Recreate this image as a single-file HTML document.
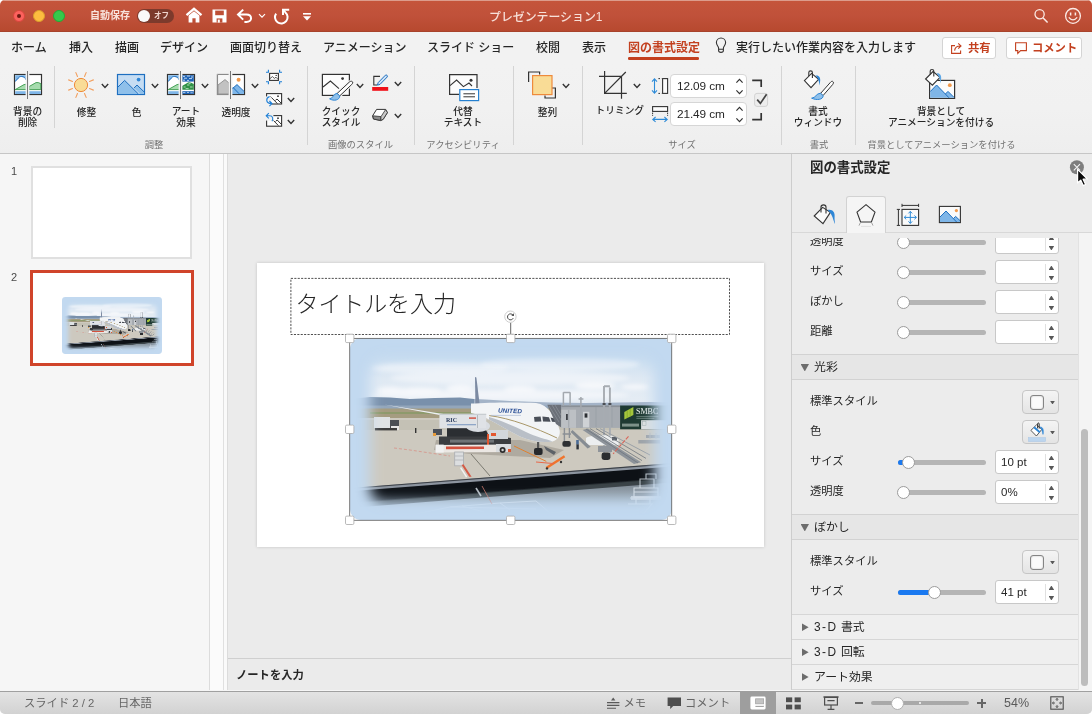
<!DOCTYPE html>
<html lang="ja">
<head>
<meta charset="utf-8">
<title>プレゼンテーション1</title>
<style>
*{box-sizing:border-box;margin:0;padding:0}
html,body{width:1092px;height:714px;overflow:hidden;background:#fff}
#win{position:absolute;left:0;top:0;width:1092px;height:714px;border-radius:5px;overflow:hidden;background:#ececec;will-change:transform}
body{font-family:"Liberation Sans","Noto Sans CJK JP",sans-serif;color:#262626;position:relative;-webkit-font-smoothing:antialiased}
.abs{position:absolute}
#titlebar{position:absolute;left:0;top:0;width:1092px;height:32px;background:linear-gradient(#c5553b 0,#c0513a 50%,#b7492f 100%);border-bottom:1px solid #a8442c;box-shadow:inset 0 1px 0 #dc9c8c}
.tl{position:absolute;top:9.6px;width:12.6px;height:12.6px;border-radius:50%}
#tabs{position:absolute;left:0;top:32px;width:1092px;height:32px;background:#f2f2f2}
.tab{position:absolute;top:8px;font-size:12px;line-height:17px;white-space:nowrap;color:#262626;font-weight:500}
#ribbon{position:absolute;left:0;top:64px;width:1092px;height:90px;background:linear-gradient(#f2f2f2 0,#f1f1f1 50%,#eeeeee 100%);border-bottom:1px solid #c6c6c6}
.rl{position:absolute;font-size:9.7px;line-height:11px;text-align:center;white-space:nowrap;color:#262626;font-weight:500;transform:translateX(-50%)}
.gl{position:absolute;top:139px;font-size:9.3px;line-height:12px;text-align:center;white-space:nowrap;color:#727272;transform:translateX(-50%)}
.sep{position:absolute;width:1px;background:#d4d4d4}
.dd{position:absolute;width:8px;height:5px}
#left{position:absolute;left:0;top:154px;width:210px;height:536px;background:#f6f6f6;border-right:1px solid #dcdcdc}
#gutter{position:absolute;left:210px;top:154px;width:18px;height:536px;background:linear-gradient(90deg,#fbfbfb 0,#fbfbfb 13px,#e0e0e0 13px,#e0e0e0 14px,#fafafa 14px,#fafafa 17px,#dcdcdc 17px)}
#main{position:absolute;left:228px;top:154px;width:563px;height:504px;background:#ebebeb}
#notes{position:absolute;left:228px;top:658px;width:563px;height:32px;background:#ebebeb;border-top:1px solid #cfcfcf}
#panel{position:absolute;left:791px;top:154px;width:301px;height:536px;background:#ececec;border-left:1px solid #cdcdcd}
#status{position:absolute;left:0;top:690px;width:1092px;height:24px;background:linear-gradient(#e4e4e4,#d2d2d2);border-top:1px solid #f6f6f6;box-shadow:inset 0 1px 0 #a0a0a0}
.st{position:absolute;font-size:11.3px;color:#666;white-space:nowrap;line-height:14px}
.pl{position:absolute;left:18px;font-size:11.3px;line-height:16px;color:#262626;white-space:nowrap}
.track{position:absolute;left:111px;width:84px;height:5px;border-radius:3px;background:#b5b5b5}
.knob{position:absolute;width:13px;height:13px;border-radius:50%;background:#fff;border:1px solid #9c9c9c}
.num{position:absolute;left:204px;width:64px;height:24px;background:#fff;border:1px solid #c8c8c8;border-radius:3px;font-size:11.5px;line-height:22px;padding-left:5px;color:#262626}
.num:after{content:"";position:absolute;left:48.5px;top:3px;width:1px;height:17px;background:#e0e0e0}
.num i{position:absolute;left:52.6px;width:5.6px;height:4.4px;background:#585858}
.num i.u{top:4.6px;clip-path:polygon(50% 0,100% 100%,0 100%)}
.num i.d{top:15px;clip-path:polygon(0 0,100% 0,50% 100%)}
.sec{position:absolute;left:0;width:286px;height:26px;background:#e6e6e6;border-top:1px solid #d2d2d2;border-bottom:1px solid #d2d2d2;font-size:11.9px;line-height:24px;padding-left:22px;color:#262626}
.sec2{position:absolute;left:0;width:286px;height:25px;background:#efefef;border-top:1px solid #d6d6d6;font-size:11.9px;line-height:24px;padding-left:22px;color:#262626}
.tri-d{position:absolute;left:8.6px;top:9px;width:8.4px;height:7.4px;background:#6c6c6c;clip-path:polygon(0 0,100% 0,50% 100%)}
.tri-r{position:absolute;left:9.6px;top:8px;width:7px;height:8px;background:#6c6c6c;clip-path:polygon(0 0,100% 50%,0 100%)}
.btn{position:absolute;left:231px;width:37px;height:24px;border:1px solid #c6c6c6;border-radius:4px;background:linear-gradient(#f4f4f4,#e4e4e4)}
.btn:after{content:"";position:absolute;left:27px;top:9.8px;width:5px;height:3.6px;background:#585858;clip-path:polygon(0 0,100% 0,50% 100%)}
.h{position:absolute;width:8px;height:8px;background:#fff;border:1px solid #8d8d8d;border-radius:1px}
</style>
</head>
<body>
<div id="win">
<!-- TITLEBAR -->
<div id="titlebar">
<div class="tl" style="left:12.6px;background:#fc625d;border:0.5px solid #d9453d"><div style="position:absolute;left:50%;top:50%;width:4px;height:4px;margin:-2px 0 0 -2px;border-radius:50%;background:#6e1a12"></div></div>
<div class="tl" style="left:32.7px;background:#fdbd3f;border:0.5px solid #dc9e2c"></div>
<div class="tl" style="left:52.7px;background:#35c94b;border:0.5px solid #23a936"></div>
<div class="abs" style="left:90px;top:9px;font-size:10px;line-height:14px;font-weight:bold;color:#f8e3dc;white-space:nowrap">自動保存</div>
<div class="abs" style="left:137px;top:9px;width:37px;height:14px;border-radius:7px;background:#7c3a2c"><div style="position:absolute;left:1px;top:1px;width:12px;height:12px;border-radius:50%;background:#fafafa"></div><div style="position:absolute;left:17px;top:2px;font-size:7.5px;line-height:10px;color:#f0d6cf;font-weight:bold">オフ</div></div>
<svg class="abs" style="left:185px;top:7px" width="18" height="17" viewBox="0 0 18 17"><path d="M1.5 8.2 L9 1.8 L16.5 8.2" fill="none" stroke="#fff" stroke-width="2.2" stroke-linejoin="miter"/><path d="M3.6 8.6 L9 4.2 L14.4 8.6 V15.6 H10.6 V11.2 H7.4 V15.6 H3.6 Z" fill="#fff"/></svg>
<svg class="abs" style="left:212px;top:9px" width="15" height="14" viewBox="0 0 15 14"><path d="M0.5 0.5 H14.5 V13.5 H0.5 Z" fill="#fff"/><rect x="3.2" y="1.6" width="8.6" height="4.6" fill="#bd4f36"/><rect x="4.6" y="9.4" width="5.8" height="4.2" fill="#bd4f36"/><rect x="5.8" y="10.6" width="2" height="3" fill="#fff"/></svg>
<svg class="abs" style="left:236px;top:8px" width="18" height="16" viewBox="0 0 18 16"><path d="M7.2 1.6 L2 6.6 L7.2 11.6 M2.2 6.6 H10.4 C16.6 6.6 16.6 14 10.4 14 H8.4" fill="none" stroke="#fff" stroke-width="2"/></svg>
<svg class="abs" style="left:258px;top:13px" width="8" height="6" viewBox="0 0 8 6"><path d="M1 1.2 L4 4.2 L7 1.2" fill="none" stroke="#fff" stroke-width="1.2"/></svg>
<svg class="abs" style="left:272px;top:7px" width="19" height="18" viewBox="0 0 19 18"><path d="M4.1 6.6 A6.3 6.3 0 1 0 13.4 5.4 L11.4 3.2" fill="none" stroke="#fff" stroke-width="2"/><path d="M11 8 V2.7 H17.2" fill="none" stroke="#fff" stroke-width="2"/></svg>
<svg class="abs" style="left:302px;top:12px" width="10" height="10" viewBox="0 0 10 10"><rect x="1" y="1" width="8" height="1.6" fill="#fff"/><path d="M1 4.2 H9 L5 8.6 Z" fill="#fff"/></svg>
<div class="abs" style="left:489px;top:9px;font-size:11.9px;line-height:17px;color:#f7e0d9;white-space:nowrap;font-weight:500">プレゼンテーション1</div>
<svg class="abs" style="left:1032px;top:7px" width="18" height="18" viewBox="0 0 18 18"><circle cx="7.6" cy="7.3" r="4.6" fill="none" stroke="#fbeae5" stroke-width="1.3"/><path d="M10.9 10.7 L15.6 15.6" stroke="#fbeae5" stroke-width="1.5"/></svg>
<svg class="abs" style="left:1064px;top:7px" width="18" height="18" viewBox="0 0 18 18"><circle cx="9" cy="8.9" r="7.4" fill="none" stroke="#fbeae5" stroke-width="1.3"/><path d="M6.6 5.4 V8.4 M11.4 5.4 V8.4" stroke="#fbeae5" stroke-width="1.5"/><path d="M4.8 10.4 Q9 15.4 13.2 10.4" fill="none" stroke="#fbeae5" stroke-width="1.3"/></svg>
</div>
<!-- TABS -->
<div id="tabs">
<div class="tab" style="left:11px">ホーム</div>
<div class="tab" style="left:69px">挿入</div>
<div class="tab" style="left:115px">描画</div>
<div class="tab" style="left:160px">デザイン</div>
<div class="tab" style="left:230px">画面切り替え</div>
<div class="tab" style="left:323px">アニメーション</div>
<div class="tab" style="left:427px">スライド ショー</div>
<div class="tab" style="left:536px">校閲</div>
<div class="tab" style="left:582px">表示</div>
<div class="tab" style="left:628px;font-weight:bold;color:#c3401f">図の書式設定</div>
<div class="abs" style="left:628px;top:25px;width:70.5px;height:2.6px;background:#c3401f;border-radius:1.3px"></div>
<svg class="abs" style="left:714px;top:5px" width="14" height="17" viewBox="0 0 14 17"><path d="M4.6 11.2 C4.6 9.4 2.4 8.4 2.4 5.6 A4.6 4.6 0 0 1 11.6 5.6 C11.6 8.4 9.4 9.4 9.4 11.2 V13.6 Q9.4 15.4 7 15.4 Q4.6 15.4 4.6 13.6 Z M4.8 12.2 H9.2" fill="none" stroke="#333" stroke-width="1.1"/></svg>
<div class="tab" style="left:736px">実行したい作業内容を入力します</div>
<div class="abs" style="left:942px;top:5px;width:54px;height:22px;background:#fff;border:1px solid #d4d4d4;border-radius:3px"></div>
<svg class="abs" style="left:950px;top:9px" width="14" height="14" viewBox="0 0 14 14"><path d="M5 4.6 H1.6 V12.4 H10.6 V9.4" fill="none" stroke="#c3401f" stroke-width="1.1"/><path d="M4.6 9.6 C5 6.4 7 5 10.2 5 M8.2 2.4 L11 5 L8.2 7.6" fill="none" stroke="#c3401f" stroke-width="1.1"/></svg>
<div class="tab" style="left:968px;font-weight:bold;color:#c3401f;font-size:11.3px">共有</div>
<div class="abs" style="left:1006px;top:5px;width:76px;height:22px;background:#fff;border:1px solid #d4d4d4;border-radius:3px"></div>
<svg class="abs" style="left:1014px;top:9px" width="14" height="14" viewBox="0 0 14 14"><path d="M1.6 1.8 H12.4 V9.6 H6.6 L3.8 12.4 V9.6 H1.6 Z" fill="none" stroke="#c3401f" stroke-width="1.1"/></svg>
<div class="tab" style="left:1032px;font-weight:bold;color:#c3401f;font-size:11.3px">コメント</div>
</div>
<!-- RIBBON -->
<div id="ribbon">
<svg class="abs" style="left:13px;top:6px" width="30" height="30" viewBox="0 0 30 30">
<rect x="1.5" y="4.5" width="27" height="20" fill="#fff" stroke="#333" stroke-width="1.2"/>
<path d="M2.2 5.2 H13 V9.8 C11.6 5.6 5.8 5.6 5.2 8.6 C3.4 8.8 3.6 11.2 2.2 11.2 Z" fill="#7fb6e8"/>
<path d="M2.2 11.2 C3.6 11.2 3.4 8.8 5.2 8.6 C5.8 5.6 11.6 5.6 13 9.8" fill="none" stroke="#1e6fc0" stroke-width="1"/>
<path d="M2.2 19.6 L11 14.6 Q13 14 14 14.6 V19.6 Z M16 16.6 L23 12.6 Q25 12 27.8 13.6 V19.6 H16 Z" fill="#a6dcae" stroke="#3a9a4c" stroke-width="0.9"/>
<rect x="2.2" y="21.2" width="25.6" height="2.8" fill="#7fb6e8"/>
<rect x="12.6" y="0" width="3.8" height="30" fill="#f1f1f1"/>
<path d="M14.5 1 V29" stroke="#777" stroke-width="1"/>
</svg>
<div class="rl" style="left:27.6px;top:41.8px">背景の</div><div class="rl" style="left:27.6px;top:53px">削除</div>
<div class="sep" style="left:54px;top:2px;height:62px"></div>
<svg class="abs" style="left:67px;top:7px" width="28" height="28" viewBox="0 0 28 28"><circle cx="14" cy="14" r="6.6" fill="#f9dc96" stroke="#ee8a3c" stroke-width="1"/><path d="M22.50 17.52 L26.38 19.13 M17.52 22.50 L19.13 26.38 M10.48 22.50 L8.87 26.38 M5.50 17.52 L1.62 19.13 M5.50 10.48 L1.62 8.87 M10.48 5.50 L8.87 1.62 M17.52 5.50 L19.13 1.62 M22.50 10.48 L26.38 8.87 " stroke="#f2a060" stroke-width="1.1" stroke-linecap="round"/></svg>
<svg class="abs" style="left:101px;top:19px" width="8" height="6" viewBox="0 0 8 6"><path d="M0.8 1 L4 4.4 L7.2 1" fill="none" stroke="#333" stroke-width="1.4"/></svg>
<div class="rl" style="left:86.5px;top:42.5px">修整</div>
<svg class="abs" style="left:116px;top:9px" width="30" height="23" viewBox="0 0 30 23">
<rect x="1.5" y="1.5" width="27" height="20" fill="#c6ddf3" stroke="#1e6fc0" stroke-width="1.2"/>
<path d="M2 14 L8.6 7.4 L22.4 21 H2 Z M18 15 L21 12 L28 19 V21 H24.4 Z" fill="#8fc0ea"/>
<path d="M2 14 L8.6 7.4 L22.4 21 M18 15 L21 12 L28.2 19" fill="none" stroke="#1e6fc0" stroke-width="1"/>
<circle cx="22.6" cy="6.6" r="1.9" fill="#2e86d6"/>
</svg>
<svg class="abs" style="left:151px;top:19px" width="8" height="6" viewBox="0 0 8 6"><path d="M0.8 1 L4 4.4 L7.2 1" fill="none" stroke="#333" stroke-width="1.4"/></svg>
<div class="rl" style="left:136.5px;top:42.5px">色</div>
<svg class="abs" style="left:166px;top:6px" width="30" height="30" viewBox="0 0 30 30">
<rect x="1.5" y="4.5" width="27" height="20" fill="#fff" stroke="#333" stroke-width="1.2"/>
<path d="M2.2 5.2 H13 V9.8 C11.6 5.6 5.8 5.6 5.2 8.6 C3.4 8.8 3.6 11.2 2.2 11.2 Z" fill="#7fb6e8"/>
<path d="M2.2 11.2 C3.6 11.2 3.4 8.8 5.2 8.6 C5.8 5.6 11.6 5.6 13 9.8" fill="none" stroke="#1e6fc0" stroke-width="1"/>
<path d="M2.2 19.6 L11 14.6 Q13 14 14 14.6 V19.6 Z" fill="#a6dcae" stroke="#3a9a4c" stroke-width="0.9"/>
<rect x="2.2" y="21.2" width="12" height="2.8" fill="#7fb6e8"/>
<rect x="16" y="5.2" width="11.8" height="6.4" fill="#1d62b4"/>
<path d="M17 6.4 h2 M21 6 h3 M25 7 h2 M18 8.2 h3 M23 8.6 h3 M17 10.2 h2 M21 10.4 h2" stroke="#cfe2f6" stroke-width="0.9"/>
<path d="M16 16 L22 12.4 Q24.6 12 27.8 14 V19.8 H16 Z" fill="#2f9146"/>
<path d="M17.6 17 h2 M21 15 h2.4 M24 17 h2.6 M19.6 18.6 h3 M22.6 13.6 h2" stroke="#b7e3bd" stroke-width="0.9"/>
<rect x="16" y="21.2" width="11.8" height="2.8" fill="#1d62b4"/>
<path d="M17 22.6 h2.4 M21 22.4 h2 M24.4 22.8 h2.4" stroke="#cfe2f6" stroke-width="0.8"/>
<rect x="12.6" y="0" width="3.8" height="30" fill="#f1f1f1"/>
<path d="M14.5 1 V29" stroke="#777" stroke-width="1"/>
</svg>
<svg class="abs" style="left:201px;top:19px" width="8" height="6" viewBox="0 0 8 6"><path d="M0.8 1 L4 4.4 L7.2 1" fill="none" stroke="#333" stroke-width="1.4"/></svg>
<div class="rl" style="left:186px;top:41.8px">アート</div><div class="rl" style="left:186px;top:53px">効果</div>
<svg class="abs" style="left:216px;top:6px" width="30" height="30" viewBox="0 0 30 30">
<rect x="1.5" y="4.5" width="27" height="20" fill="#fff" stroke="#333" stroke-width="1.2"/>
<rect x="1" y="3.8" width="12" height="21.6" fill="#f7f7f7"/>
<path d="M1.5 4.5 H13 M1.5 4.5 V24.5 H13" fill="none" stroke="#8a8a8a" stroke-width="1.1"/>
<path d="M2 15 L9 9.6 L13 13 V24 H2 Z" fill="#c2c2c2" stroke="#8f8f8f" stroke-width="0.9"/>
<path d="M16 19 L21 14.6 L28 21.6 V24 H16 Z" fill="#7fb6e8"/>
<path d="M16 19 L21 14.6 L28 21.4 M16.6 17 L23.2 23.8" fill="none" stroke="#1e6fc0" stroke-width="1"/>
<circle cx="22.6" cy="9.8" r="2" fill="#f2994a"/>
<rect x="12.6" y="0" width="3.8" height="30" fill="#f1f1f1"/>
<path d="M14.5 1 V29" stroke="#777" stroke-width="1"/>
</svg>
<svg class="abs" style="left:251px;top:19px" width="8" height="6" viewBox="0 0 8 6"><path d="M0.8 1 L4 4.4 L7.2 1" fill="none" stroke="#333" stroke-width="1.4"/></svg>
<div class="rl" style="left:236px;top:42.5px">透明度</div>
<svg class="abs" style="left:265px;top:5px" width="18" height="16" viewBox="0 0 18 16">
<path d="M1 3.2 H3.4 V0.8 M14.6 0.8 V3.2 H17 M17 12.8 H14.6 V15.2 M3.4 15.2 V12.8 H1" fill="none" stroke="#1e7fd6" stroke-width="1.1"/>
<rect x="4.6" y="4.4" width="8.8" height="7" fill="#fff" stroke="#333" stroke-width="1.1"/>
<path d="M5 9.6 L7.4 7.6 L9.4 9.4 L11 8.2 L13 10.4" fill="none" stroke="#333" stroke-width="0.8"/><circle cx="11.2" cy="6.4" r="0.7" fill="#333"/>
</svg>
<svg class="abs" style="left:265px;top:28px" width="18" height="16" viewBox="0 0 18 16">
<rect x="1.6" y="1.6" width="15" height="10.4" fill="#fff" stroke="#333" stroke-width="1.1"/>
<path d="M5 4 L12.4 11.6 M10.4 8.4 L12 7 L16.4 11.4" fill="none" stroke="#333" stroke-width="1"/><circle cx="13" cy="4.2" r="0.9" fill="#333"/>
<rect x="0" y="4.4" width="6.4" height="11.6" fill="#f1f1f1"/>
<path d="M4.6 4.6 C0.6 6.2 0.4 11.2 6.6 11.6 M4.4 9 L7 11.6 L4.4 14.2" fill="none" stroke="#1e7fd6" stroke-width="1.1"/>
</svg>
<svg class="abs" style="left:287px;top:33px" width="8" height="6" viewBox="0 0 8 6"><path d="M0.8 1 L4 4.4 L7.2 1" fill="none" stroke="#333" stroke-width="1.4"/></svg>
<svg class="abs" style="left:265px;top:48px" width="18" height="16" viewBox="0 0 18 16">
<rect x="1.6" y="3.6" width="15" height="10.6" fill="#fff" stroke="#333" stroke-width="1.1"/>
<path d="M8.4 8.4 L13.4 13.6 M10.6 9.4 L12.2 8 L16.4 12.4" fill="none" stroke="#333" stroke-width="1"/><circle cx="13" cy="6.2" r="0.9" fill="#333"/>
<rect x="0" y="0" width="8.4" height="8.6" fill="#f1f1f1"/>
<path d="M1.4 3.8 H4.6 C8 3.8 8.4 7 7 9.2 M3.8 1.2 L1.2 3.8 L3.8 6.4" fill="none" stroke="#1e7fd6" stroke-width="1.1"/>
</svg>
<svg class="abs" style="left:287px;top:55px" width="8" height="6" viewBox="0 0 8 6"><path d="M0.8 1 L4 4.4 L7.2 1" fill="none" stroke="#333" stroke-width="1.4"/></svg>
<div class="gl" style="left:154px;top:75px">調整</div>
<div class="sep" style="left:307px;top:2px;height:79px"></div>
<svg class="abs" style="left:320px;top:6px" width="34" height="32" viewBox="0 0 34 32">
<rect x="2.4" y="4.4" width="27" height="21" fill="#fcfcfc" stroke="#333" stroke-width="1.2"/>
<path d="M3 17 L10.4 11 L19 18.6" fill="none" stroke="#333" stroke-width="1.1"/>
<circle cx="22.6" cy="8.6" r="1.4" fill="#333"/>
<path d="M32 11.4 C33.4 12 32.6 13.6 31.6 14.6 L19.6 26 L17 23.6 L29 12.4 C30 11.4 31.2 11 32 11.4 Z" fill="#fcfcfc" stroke="#f1f1f1" stroke-width="3"/>
<path d="M32 11.4 C33.4 12 32.6 13.6 31.6 14.6 L19.6 26 L17 23.6 L29 12.4 C30 11.4 31.2 11 32 11.4 Z" fill="#fff" stroke="#333" stroke-width="1"/>
<path d="M17 23.4 L19.8 26 C19.6 30 14 31.6 9.6 28.8 C13.4 28.6 13 23.6 17 23.4 Z" fill="#8fc0ea" stroke="#2e86d6" stroke-width="1"/>
</svg>
<svg class="abs" style="left:356px;top:19px" width="8" height="6" viewBox="0 0 8 6"><path d="M0.8 1 L4 4.4 L7.2 1" fill="none" stroke="#333" stroke-width="1.4"/></svg>
<div class="rl" style="left:341px;top:41.8px">クイック</div><div class="rl" style="left:341px;top:53px">スタイル</div>
<svg class="abs" style="left:371px;top:9px" width="18" height="19" viewBox="0 0 18 19">
<path d="M9 3.4 H2.8 V12 H6" fill="none" stroke="#333" stroke-width="1.1"/>
<path d="M14.4 2.2 C15.6 1.4 17 2.8 16.2 4 L9 11.4 L6.4 12.2 L7.2 9.6 Z" fill="#cfe3f6" stroke="#1e6fc0" stroke-width="1"/>
<rect x="1.2" y="14" width="16" height="3.8" fill="#f0111a"/>
</svg>
<svg class="abs" style="left:394px;top:17px" width="8" height="6" viewBox="0 0 8 6"><path d="M0.8 1 L4 4.4 L7.2 1" fill="none" stroke="#333" stroke-width="1.4"/></svg>
<svg class="abs" style="left:371px;top:44px" width="18" height="14" viewBox="0 0 18 14">
<path d="M5.6 1.4 H14.6 L16.4 4.6 L12.2 11.4 L9.6 12.6 L2.4 11 L1.6 7.8 Z" fill="#fff" stroke="#333" stroke-width="1"/>
<path d="M1.8 7.8 L10 8.6 L9.6 12.4 L2.6 11 Z" fill="#8d8d8d" stroke="#333" stroke-width="0.8"/>
<path d="M10 8.6 L14.6 1.6 L16.4 4.6 L12.2 11.2 L9.8 12.4 Z" fill="#c9c9c9" stroke="#333" stroke-width="0.8"/>
</svg>
<svg class="abs" style="left:394px;top:49px" width="8" height="6" viewBox="0 0 8 6"><path d="M0.8 1 L4 4.4 L7.2 1" fill="none" stroke="#333" stroke-width="1.4"/></svg>
<div class="gl" style="left:360.5px;top:75px">画像のスタイル</div>
<div class="sep" style="left:414px;top:2px;height:79px"></div>
<svg class="abs" style="left:448px;top:9px" width="32" height="29" viewBox="0 0 32 29">
<path d="M11 21.4 H1.6 V1.6 H29 V15" fill="#fcfcfc" stroke="#333" stroke-width="1.2"/>
<path d="M2 12.6 L8.6 7 L15.4 13.6 L21 10 L24 13" fill="none" stroke="#333" stroke-width="1.1"/>
<circle cx="23" cy="7.2" r="1.5" fill="#333"/>
<rect x="11.8" y="16.6" width="18.8" height="11" fill="#fff" stroke="#2580d0" stroke-width="1.2"/>
<path d="M15.4 20.8 H27 M15.4 23.8 H27" stroke="#333" stroke-width="1"/>
</svg>
<div class="rl" style="left:463px;top:41.8px">代替</div><div class="rl" style="left:463px;top:53px">テキスト</div>
<div class="gl" style="left:463px;top:75px">アクセシビリティ</div>
<div class="sep" style="left:513px;top:2px;height:79px"></div>
<svg class="abs" style="left:526px;top:6px" width="32" height="30" viewBox="0 0 32 30">
<path d="M2.6 12 V2 H13.6 V4.6 M18.6 18 H29.4 V28 H19 V25.4" fill="none" stroke="#333" stroke-width="1.2"/>
<rect x="6.6" y="5.6" width="19.4" height="19" fill="#f9dc96" stroke="#ee8a3c" stroke-width="1.2"/>
</svg>
<svg class="abs" style="left:562px;top:19px" width="8" height="6" viewBox="0 0 8 6"><path d="M0.8 1 L4 4.4 L7.2 1" fill="none" stroke="#333" stroke-width="1.4"/></svg>
<div class="rl" style="left:547.5px;top:42.5px">整列</div>
<div class="sep" style="left:582px;top:2px;height:79px"></div>
<svg class="abs" style="left:598px;top:6px" width="30" height="30" viewBox="0 0 30 30">
<path d="M6.6 1 V23.4 H28.8 M1 6.3 H23.5 V28.8 M6.6 23.4 L27.8 2" fill="none" stroke="#333" stroke-width="1.2"/>
</svg>
<svg class="abs" style="left:633px;top:19px" width="8" height="6" viewBox="0 0 8 6"><path d="M0.8 1 L4 4.4 L7.2 1" fill="none" stroke="#333" stroke-width="1.4"/></svg>
<div class="rl" style="left:619.8px;top:40.5px">トリミング</div>
<svg class="abs" style="left:651px;top:13px" width="18" height="18" viewBox="0 0 18 18">
<path d="M3.5 2 V16 M1 4.6 L3.5 1.8 L6 4.6 M1 13.4 L3.5 16.2 L6 13.4" fill="none" stroke="#2e8bd8" stroke-width="1.1"/>
<path d="M7.4 1.6 H10.2 M7.4 16.4 H10.2" stroke="#333" stroke-width="1" stroke-dasharray="1.6 1"/>
<rect x="11.6" y="1.6" width="5" height="14.8" fill="#fcfcfc" stroke="#333" stroke-width="1.1"/>
</svg>
<svg class="abs" style="left:651px;top:41px" width="18" height="18" viewBox="0 0 18 18">
<rect x="1.6" y="1.6" width="15" height="4.8" fill="#fcfcfc" stroke="#333" stroke-width="1.1"/>
<path d="M1.6 7.6 V11 M16.6 7.6 V11" stroke="#333" stroke-width="1" stroke-dasharray="1.6 1"/>
<path d="M2 14.4 H16 M4.6 12 L1.8 14.4 L4.6 16.8 M13.4 12 L16.2 14.4 L13.4 16.8" fill="none" stroke="#2e8bd8" stroke-width="1.1"/>
</svg>
<div class="abs" style="left:670px;top:10px;width:77px;height:24px;background:#fff;border:1px solid #d6d6d6;border-radius:4px;font-size:11.8px;line-height:23px;padding-left:6px;color:#262626;white-space:nowrap;letter-spacing:-0.1px">12.09 cm</div>
<svg class="abs" style="left:735px;top:13.6px" width="9" height="18" viewBox="0 0 9 18"><path d="M1.4 4.6 L4.5 1.4 L7.6 4.6 M1.4 12.4 L4.5 15.6 L7.6 12.4" fill="none" stroke="#333" stroke-width="1.2"/></svg>
<div class="abs" style="left:670px;top:38px;width:77px;height:24px;background:#fff;border:1px solid #d6d6d6;border-radius:4px;font-size:11.8px;line-height:23px;padding-left:6px;color:#262626;white-space:nowrap;letter-spacing:-0.1px">21.49 cm</div>
<svg class="abs" style="left:735px;top:42px" width="9" height="18" viewBox="0 0 9 18"><path d="M1.4 4.6 L4.5 1.4 L7.6 4.6 M1.4 12.4 L4.5 15.6 L7.6 12.4" fill="none" stroke="#333" stroke-width="1.2"/></svg>
<svg class="abs" style="left:751px;top:14px" width="18" height="44" viewBox="0 0 18 44">
<path d="M1.2 2.4 H10.2 V9 M1.2 41.6 H10.2 V35" fill="none" stroke="#333" stroke-width="1.7"/>
<rect x="3.6" y="15.4" width="13" height="13" rx="2.4" fill="#ededed" stroke="#d2d2d2" stroke-width="1"/>
<path d="M6.2 21.6 L9.4 25.4 L15.6 16.2" fill="none" stroke="#444" stroke-width="1.7"/>
</svg>
<div class="gl" style="left:682px;top:75px">サイズ</div>
<div class="sep" style="left:781px;top:2px;height:79px"></div>
<svg class="abs" style="left:802px;top:5px" width="34" height="32" viewBox="0 0 34 32">
<path d="M2.4 11.6 L9.6 4.4 L16.6 10.4 L9 18.6 Z" fill="#fff" stroke="#333" stroke-width="1.1"/>
<path d="M6.8 7 V3.4 C6.8 1.4 10.4 1.4 10.4 3.4 V9" fill="none" stroke="#333" stroke-width="1.1"/>
<path d="M13.4 6.6 C16.6 5.6 18.6 8.6 18.2 11.6 C18 13.6 17.8 15 17.6 16.4 C17 13.6 17 10 13.4 6.6 Z" fill="#2e86d6"/>
<path d="M30.6 12.4 C32 13 31.4 14.6 30.6 15.6 L21 26.6 L18.6 24.4 L28.4 13.4 C29 12.6 30 12 30.6 12.4 Z" fill="#fff" stroke="#333" stroke-width="1"/>
<path d="M18.6 24.2 L21.2 26.8 C21 30.6 15 31.6 9.6 29.2 C14 28.8 14 24.4 18.6 24.2 Z" fill="#8fc0ea" stroke="#2e86d6" stroke-width="1"/>
</svg>
<div class="rl" style="left:818px;top:41.8px">書式</div><div class="rl" style="left:818px;top:53px">ウィンドウ</div>
<div class="gl" style="left:819px;top:75px">書式</div>
<div class="sep" style="left:855px;top:2px;height:79px"></div>
<svg class="abs" style="left:923px;top:4px" width="34" height="32" viewBox="0 0 34 32">
<rect x="6.6" y="12.4" width="25" height="18" fill="#fcfcfc" stroke="#333" stroke-width="1.2"/>
<path d="M7.2 23.6 L13.6 17 L26 29.8 H7.2 Z M22.4 26 L25 23.4 L31 29.4 V29.8 H26 Z" fill="#7fb6e8"/>
<path d="M7.2 23.6 L13.6 17 L26 29.8 M22.4 26 L25 23.4 L31 29.4" fill="none" stroke="#1e6fc0" stroke-width="1"/>
<circle cx="26.8" cy="17.2" r="1.9" fill="#f2994a"/>
<path d="M2.6 11 L10 3.6 L17 9.4 L9.4 17.2 Z" fill="#fff" stroke="#333" stroke-width="1.1"/>
<path d="M7.2 6.4 V3 C7.2 1 10.8 1 10.8 3 V8.6" fill="none" stroke="#333" stroke-width="1.1"/>
<path d="M13.6 5.4 C16.6 4.4 18.4 7.4 18.2 10 C18 12 17.8 13.6 17.6 15.4 C17 12.6 17 9 13.6 5.4 Z" fill="#5fa8e6"/>
</svg>
<div class="rl" style="left:941px;top:41.8px">背景として</div><div class="rl" style="left:941px;top:53px">アニメーションを付ける</div>
<div class="gl" style="left:941.5px;top:75px">背景としてアニメーションを付ける</div>
</div>
<!-- LEFT -->
<svg width="0" height="0" style="position:absolute">
<defs>
<filter id="fb" x="-20%" y="-20%" width="140%" height="140%"><feGaussianBlur stdDeviation="6.5"/></filter>
<filter id="fc" x="-20%" y="-50%" width="140%" height="200%"><feGaussianBlur stdDeviation="2.2"/></filter>
<filter id="fd" x="-20%" y="-50%" width="140%" height="200%"><feGaussianBlur stdDeviation="0.5"/></filter>
<mask id="pm" maskUnits="userSpaceOnUse" x="0" y="0" width="322" height="182"><rect x="20" y="19" width="284" height="145" rx="14" fill="#fff" filter="url(#fb)"/></mask>
<linearGradient id="sky" x1="0" y1="0" x2="0" y2="1"><stop offset="0" stop-color="#bfd7ee"/><stop offset="0.3" stop-color="#cbdef0"/><stop offset="0.6" stop-color="#dfe9f3"/><stop offset="1" stop-color="#e6edf4"/></linearGradient>
<linearGradient id="glass" x1="0" y1="0" x2="0" y2="1"><stop offset="0" stop-color="#59636c"/><stop offset="0.45" stop-color="#8c98a3"/><stop offset="0.8" stop-color="#bccfe2"/><stop offset="1" stop-color="#c4dbf1"/></linearGradient>
<symbol id="photo" viewBox="0 0 322 182">
<rect x="0" y="0" width="322" height="182" rx="11" fill="#c2d9f0"/>
<g mask="url(#pm)">
<rect x="0" y="0" width="322" height="68" fill="url(#sky)"/>
<g filter="url(#fc)" fill="#f6f8fb">
<ellipse cx="90" cy="30" rx="70" ry="6" opacity="0.6"/><ellipse cx="210" cy="26" rx="80" ry="7" opacity="0.6"/><ellipse cx="160" cy="40" rx="120" ry="7" opacity="0.6"/><ellipse cx="70" cy="53" rx="22" ry="3.4"/><ellipse cx="110" cy="50" rx="14" ry="3"/><ellipse cx="170" cy="51" rx="16" ry="3"/><ellipse cx="245" cy="48" rx="20" ry="3.4"/><ellipse cx="285" cy="49" rx="14" ry="2.6"/><ellipse cx="150" cy="57" rx="130" ry="5" opacity="0.8"/><ellipse cx="40" cy="52" rx="14" ry="3"/>
</g>
<path d="M0 61 L20 59 L40 59.6 L60 61 L85 60 L110 59.4 L124 61 L124 70 H0 Z" fill="#7990ab" filter="url(#fd)"/><path d="M124 61 L135 61.6 L160 63 L200 64.4 L235 65 L270 64.4 L300 64 L322 64.4 V70 H124 Z" fill="#a3b3c7" filter="url(#fd)"/>
<rect x="0" y="67.5" width="322" height="4" fill="#93a6bb"/>
<rect x="0" y="70.5" width="322" height="10.5" fill="#a59c80"/>
<rect x="20" y="74" width="150" height="2" fill="#8e9a6c"/>
<path d="M0 80 H322 V160 H0 Z" fill="#cdc9bf"/>
<path d="M0 82 H322 V92 H0 Z" fill="#c1bdb1" opacity="0.7"/>
<!-- wing -->
<path d="M34 66.4 L90 75.6 L122 80 L122 83 L60 71.4 Z" fill="#eef1f4"/>
<!-- tail fin -->
<path d="M125 39 L126.4 39.4 L129.6 66 L125.4 66 Z" fill="#7c8aa2"/>
<!-- shadows on tarmac -->
<path d="M86 102 H170 L214 112 L200 120 L120 116 L84 112 Z" fill="#a8a398" opacity="0.8"/>
<!-- fuselage -->
<path d="M121 65.6 C140 64.2 170 64 186 65 C198 66.4 207 80 209.6 92 C210.6 97 208 102 202.6 103.4 C192 105 180 103 170 98.4 C158 92.6 148 86 139 81.4 C132 78 126 76 121 75 Z" fill="#f2f4f6"/>
<path d="M139 81.4 C148 86 158 92.6 170 98.4 C180 103 192 105 202.6 103.4 C196 101 186 99 176 94 C164 88 150 82 139 79 Z" fill="#b9bfc7"/>
<path d="M139.2 77.6 C160 80 186 90 207 100" fill="none" stroke="#a08c58" stroke-width="0.9"/>
<path d="M184 79 L190.6 78.6 L191.4 83.6 L184.6 83.8 Z M192.4 78.6 L199 79.2 L200.6 83.8 L193 83.6 Z M200.6 79.6 L204.6 80.6 L205.6 84 L202 83.8 Z" fill="#4a4f58"/>
<text x="148" y="74.6" font-family="Liberation Sans, sans-serif" font-size="6.4" font-weight="bold" font-style="italic" fill="#2a4f96" transform="rotate(2 148 74)">UNITED</text>
<path d="M141 77.4 h30" stroke="#9fb0cc" stroke-width="0.6"/>
<!-- engine -->
<path d="M97 90 H135 L138 96 V101 H97 Z" fill="#2b2e32"/>
<ellipse cx="128" cy="88" rx="12" ry="6" fill="#d9dde2"/>
<!-- truck -->
<rect x="24" y="79" width="16" height="11" fill="#dfe2e4"/><rect x="40" y="82" width="9" height="10" fill="#4b4f55"/><rect x="41" y="88" width="8" height="4" fill="#e6e6e6"/><rect x="25" y="90" width="22" height="2.4" fill="#3d3d3d"/>
<rect x="65" y="90" width="1.4" height="5" fill="#333"/>
<!-- container -->
<rect x="89.4" y="75.8" width="46.8" height="14.4" fill="#dfe2e6"/><rect x="89.4" y="75.8" width="46.8" height="1" fill="#c3c7cc"/><rect x="127" y="77" width="1" height="13" fill="#b4b8bd"/>
<text x="96" y="84" font-family="Liberation Serif, serif" font-size="6" font-weight="bold" fill="#283a5c">RIC</text>
<rect x="119" y="79.4" width="7" height="1.4" fill="#d04a3a"/>
<rect x="97" y="86" width="29" height="1.3" fill="#8fa6c8"/>
<rect x="83" y="91" width="9" height="6" fill="#4a4f58"/><rect x="83" y="95" width="3" height="3" fill="#e69a3a"/>
<!-- loader -->
<path d="M89 98.5 H150 L161 100 V108 H89 Z" fill="#3b3d40"/>
<rect x="100" y="101.6" width="44" height="3" fill="#6f7376"/>
<rect x="138" y="92" width="20" height="9" fill="#d3d7db"/>
<rect x="137" y="96" width="2" height="12" fill="#e2562e"/><rect x="141" y="95" width="5" height="3" fill="#e2562e"/>
<path d="M85.7 107 L161 106.6 V114 L85.7 114.6 Z" fill="#ebe7e3"/><path d="M96 108.6 L134 108.4 V111 L96 111.2 Z" fill="#d4523f"/>
<rect x="85.7" y="106.6" width="8" height="8" fill="#f1f1f1"/>
<rect x="146" y="106" width="15" height="8" fill="#d9dcdf"/><circle cx="152.6" cy="112" r="3" fill="#2c2c2c"/><circle cx="152.6" cy="112" r="1.2" fill="#d0d0d0"/><rect x="158" y="111" width="3" height="3" fill="#e2562e"/>
<rect x="104.7" y="114" width="8.8" height="13.8" fill="#dcdee0" stroke="#a9acb0" stroke-width="0.8"/><path d="M105 118 h8 M105 122 h8" stroke="#a9acb0" stroke-width="0.7"/>
<path d="M113.5 126.3 L121.6 138.8 L119.2 138.8 L111.6 127 Z" fill="#d45a46"/><path d="M110.6 129.6 L116.6 139" stroke="#f3f3f3" stroke-width="1.4"/>
<path d="M44 110 L60 112 L100 118" stroke="#d98a80" stroke-width="0.7" stroke-dasharray="3 2" fill="none"/>
<path d="M121 116 L140 138" stroke="#57574f" stroke-width="0.7"/>
<!-- nose gear -->
<rect x="187" y="104" width="2.2" height="9" fill="#555"/><rect x="184" y="110" width="8.6" height="7" rx="2" fill="#26282b"/>
<path d="M194 108 L206 114 L204 117 L196 112 Z" fill="#5d6268"/>
<path d="M164 108 L196.3 123.4" stroke="#e0812f" stroke-width="1"/>
<path d="M214.6 118.3 L196.3 130" stroke="#f0742c" stroke-width="2.4"/><path d="M186 124 L204 125.6" stroke="#e8684a" stroke-width="1"/><circle cx="197" cy="130.4" r="1.2" fill="#333"/><circle cx="211" cy="124" r="1.2" fill="#333"/>
<!-- jet bridge -->
<path d="M197.3 66.8 L211.3 66.8 V89.4 L206 86 Z" fill="#6b7078"/>
<path d="M199 68 L209 84 M202 67 L211 82 M205 67 L211 77" stroke="#8d9299" stroke-width="0.7"/>
<rect x="211.3" y="67.5" width="59" height="22.4" fill="#a6abb1"/>
<rect x="211.3" y="67.5" width="59" height="1.6" fill="#8a9097"/>
<rect x="211.3" y="71.7" width="14.7" height="18.2" fill="#bcc0c4"/><rect x="216" y="76" width="1.8" height="6" fill="#3c3f44"/><rect x="218.4" y="72" width="0.8" height="17.6" fill="#9a9fa5"/>
<rect x="233" y="73.8" width="6.3" height="15.6" fill="#cfd2d5"/><rect x="234.6" y="75.4" width="2.8" height="4.2" fill="#2c2f33"/>
<path d="M246 69 V89 M262 69 V89" stroke="#969ba2" stroke-width="0.6"/>
<path d="M213.4 54.2 V67.5 M220.1 54.2 V67.5 M213.4 54.6 H220.1 M230.9 59.1 V90 M228.6 61 H233.4" stroke="#a3a8ae" stroke-width="1.5" fill="none"/>
<path d="M254 47.9 V120 M259.9 49.6 V116 M254 48.3 H259.9" stroke="#a7acb2" stroke-width="1.9" fill="none"/>
<path d="M252.6 66 h3 M258.4 66 h3" stroke="#4a4e54" stroke-width="2"/>
<path d="M214.4 89.9 V103 M219.4 89.9 V100 M212.6 96 H221" stroke="#8a8f95" stroke-width="1.4"/>
<rect x="212.4" y="103" width="8.4" height="5.8" rx="2" fill="#2e3033"/>
<rect x="251.6" y="114.4" width="8.8" height="7.6" rx="2.4" fill="#2b2d30"/>
<rect x="248" y="108" width="14" height="6" fill="#8f949a"/>
<!-- white vehicle -->
<path d="M236 100 C240 97 256 96.6 262 98 L268.6 101.6 V107 H236 Z" fill="#eceeef"/><rect x="262" y="99" width="5" height="3.4" fill="#5a6068"/>
<!-- stairs -->
<path d="M222.5 92 L240.7 108.8 L237.6 110.4 L220.6 94 Z" fill="#868c93"/>
<path d="M237.9 90.6 L291.1 124.2 L284 126 L232.6 92 Z" fill="#8d939a"/>
<path d="M236 91 L288 125 M240 90.6 L292 122.6 M246 90.6 L296 120.4" stroke="#70767d" stroke-width="0.8"/>
<path d="M250 90.6 L300 117" stroke="#9aa0a6" stroke-width="1"/>
<path d="M278.5 98.3 L263.1 115.8" stroke="#d8675a" stroke-width="1.1" stroke-dasharray="4 1.4"/>
<rect x="226.2" y="102" width="2.6" height="4.6" fill="#4a6a94"/><rect x="226.4" y="106.4" width="2.4" height="5" fill="#2c3138"/>
<!-- SMBC -->
<rect x="270.1" y="67.5" width="52" height="23.8" fill="#1e3a32"/>
<path d="M274.3 74 L283.4 68.9 V77 L274.3 81.5 Z" fill="#a4c63c"/><path d="M277.2 72.4 V80 M280.2 70.8 V78.6" stroke="#7fa326" stroke-width="0.7"/>
<text x="286" y="76.2" font-family="Liberation Serif, serif" font-size="8" fill="#f0f3f0">SMBC</text>
<path d="M286.4 78.6 h22 M286.4 80.4 h18" stroke="#8aa098" stroke-width="0.6"/>
<rect x="272" y="85.6" width="17" height="3" fill="#7d9189"/>
<rect x="291.1" y="82.2" width="31" height="9.1" fill="#dcdfdf"/><rect x="292.4" y="83.6" width="3.6" height="4" fill="none" stroke="#9aa" stroke-width="0.5"/>
<path d="M296 97 h14 v3 h-14 z M288.3 102 h22 v3.4 h-22 z" fill="#9da2a7"/><path d="M300 94.8 v6 M306 95 v6" stroke="#b5b9bd" stroke-width="1"/>
<!-- ledge -->
<g transform="translate(0 1.6)">
<path d="M0 150 L322 125.2 V182 H0 Z" fill="url(#glass)"/>
<path d="M0 148.5 L322 123.7 V128 L0 153 Z" fill="#8d95a0"/>
<path d="M0 148.3 L322 123.5 V124.7 L0 149.5 Z" fill="#3c4046"/>
<path d="M0 151.6 L322 126.8 V139 L0 164 Z" fill="#0d1116"/>
<path d="M0 163 L322 138 V143 L0 168.5 Z" fill="#2a3036" filter="url(#fd)" opacity="0.8"/>
</g>
<!-- reflections -->
<g fill="none" stroke="#e8f0f8" stroke-width="0.9" opacity="0.75">
<path d="M66 176 L100 169 L150 165 L186 163 L200 175 L222 173 L232 180"/>
<path d="M112 168 L134 174 M150 165 L160 172 M100 169 L186 171"/>
<path d="M126 150 L131 158" stroke-width="1.6"/>
<path d="M284 150 h24 v9 h-24 z M280 160 h32 M278 166 h24 l-8 9 M290 150 v-9 h14 v9 M296 141 v-5 h10 v5 M284 154 h24 M286 160 v6 M300 160 v6" stroke-width="1.1"/><rect x="281" y="158" width="30" height="4" fill="#e3ebf3" stroke="none" opacity="0.8"/>
</g>
<path d="M132 148 L142 166" stroke="#c9766a" stroke-width="1" opacity="0.8"/>
</g>
</symbol>
</defs>
</svg>
<div id="left">
<div class="abs" style="left:11px;top:10px;font-size:11px;line-height:14px;color:#4a4a4a">1</div>
<div class="abs" style="left:31px;top:12px;width:161px;height:93px;background:#fff;border:2px solid #e0e0e0"></div>
<div class="abs" style="left:11px;top:116px;font-size:11px;line-height:14px;color:#4a4a4a">2</div>
<div class="abs" style="left:30px;top:116px;width:164px;height:96px;background:#fff;border:3px solid #d0442a"></div>
<svg class="abs" style="left:62px;top:142.5px" width="100" height="57" viewBox="0 0 322 182" preserveAspectRatio="none"><use href="#photo" x="0" y="0" width="322" height="182"/></svg>
</div>
<div id="gutter"></div>
<!-- MAIN -->
<div id="main">
<div class="abs" style="left:29px;top:109px;width:507px;height:284px;background:#fff;box-shadow:0 0 3px rgba(0,0,0,0.18)"></div>
<div class="abs" style="left:67.5px;top:133px;font-size:23px;line-height:34px;font-weight:300;color:#262626;white-space:nowrap;letter-spacing:-0.1px">タイトルを入力</div>
<svg class="abs" style="left:121.7px;top:184.4px" width="322" height="182" viewBox="0 0 322 182"><use href="#photo" x="0" y="0" width="322" height="182"/></svg>
<svg class="abs" style="left:0;top:0" width="563" height="504" viewBox="0 0 563 504">
<rect x="62.9" y="124.4" width="438.6" height="56.1" fill="none" stroke="#3c3c3c" stroke-width="0.9" stroke-dasharray="2.1 1.3"/>
<rect x="121.7" y="184.4" width="322.0" height="181.9" fill="none" stroke="#6a6a6a" stroke-width="0.9"/>
<path d="M282.7 168.6 V180.4" stroke="#555" stroke-width="0.9"/>
<circle cx="282.4" cy="162.7" r="5.7" fill="#fff" stroke="#c8c8c8" stroke-width="0.9"/>
<path d="M285.0 161.2 A3 3 0 1 0 285.2 164.2" fill="none" stroke="#4a4a4a" stroke-width="1"/>
<path d="M283.3 161.7 L286.0 162.0 L285.8 159.2 Z" fill="#4a4a4a"/>
<rect x="117.5" y="180.2" width="8.4" height="8.4" rx="1.3" fill="#fff" stroke="#a8a8a8" stroke-width="0.8"/><rect x="278.5" y="180.2" width="8.4" height="8.4" rx="1.3" fill="#fff" stroke="#a8a8a8" stroke-width="0.8"/><rect x="439.5" y="180.2" width="8.4" height="8.4" rx="1.3" fill="#fff" stroke="#a8a8a8" stroke-width="0.8"/><rect x="117.5" y="271.1" width="8.4" height="8.4" rx="1.3" fill="#fff" stroke="#a8a8a8" stroke-width="0.8"/><rect x="439.5" y="271.1" width="8.4" height="8.4" rx="1.3" fill="#fff" stroke="#a8a8a8" stroke-width="0.8"/><rect x="117.5" y="362.1" width="8.4" height="8.4" rx="1.3" fill="#fff" stroke="#a8a8a8" stroke-width="0.8"/><rect x="278.5" y="362.1" width="8.4" height="8.4" rx="1.3" fill="#fff" stroke="#a8a8a8" stroke-width="0.8"/><rect x="439.5" y="362.1" width="8.4" height="8.4" rx="1.3" fill="#fff" stroke="#a8a8a8" stroke-width="0.8"/>
</svg>
</div>
<div id="notes"><div class="abs" style="left:8px;top:8px;font-size:11.3px;line-height:16px;font-weight:bold;color:#262626">ノートを入力</div></div>
<!-- PANEL -->
<div id="panel">
<div class="abs" style="left:18px;top:5px;font-size:13.4px;line-height:18px;font-weight:bold;color:#262626;white-space:nowrap">図の書式設定</div>
<svg class="abs" style="left:277px;top:5px" width="16" height="16" viewBox="0 0 16 16"><circle cx="7.9" cy="8.2" r="7" fill="#7e7e7e"/><path d="M4.8 5.1 L11 11.3 M11 5.1 L4.8 11.3" stroke="#f4f4f4" stroke-width="1.1"/></svg>
<div class="abs" style="left:0;top:78px;width:300px;height:1px;background:#d8d8d8"></div>
<div class="abs" style="left:54px;top:42px;width:40px;height:37px;background:#f5f5f5;border:1px solid #d2d2d2;border-bottom:none;border-radius:3px 3px 0 0"></div>
<svg class="abs" style="left:20px;top:49px" width="26" height="24" viewBox="0 0 26 24"><path d="M2.2 13 L10.6 4.4 L18.4 9.4 L11 20.6 Z" fill="#fafafa" stroke="#333" stroke-width="1.1"/><path d="M9 9.4 V4 C9 1.2 14 1.2 14 4 V10.4" fill="none" stroke="#333" stroke-width="1.1"/><path d="M15.6 7 C20 5.6 23 9 22.6 13 C22.4 16 22.8 18.6 23 21 C21 17.6 21.2 12 15.6 7 Z" fill="#2e86d6"/></svg>
<svg class="abs" style="left:62px;top:48px" width="24" height="26" viewBox="0 0 24 26"><path d="M12 2.6 L21 10.2 L17.4 20 H6.6 L3 10.2 Z" fill="none" stroke="#333" stroke-width="1.1"/><path d="M6.4 20.6 L5 23.6 M17.6 20.6 L19 23.6" stroke="#9a9a9a" stroke-width="0.9"/><path d="M7 24.4 H17" stroke="#e0e0e0" stroke-width="1"/></svg>
<svg class="abs" style="left:104px;top:49px" width="25" height="24" viewBox="0 0 25 24"><path d="M2.4 6.4 V22.4 M0.8 6.4 H4 M0.8 22.4 H4 M6 2.4 H22.6 M6 0.8 V4 M22.6 0.8 V4" stroke="#333" stroke-width="1" fill="none"/><rect x="6" y="6.4" width="16.6" height="16" fill="#fafafa" stroke="#333" stroke-width="1.1"/><path d="M14.3 8.4 V20.4 M8.2 14.4 H20.4 M12.4 10.4 L14.3 8.4 L16.2 10.4 M12.4 18.4 L14.3 20.4 L16.2 18.4 M10.2 12.5 L8.2 14.4 L10.2 16.3 M18.4 12.5 L20.4 14.4 L18.4 16.3" fill="none" stroke="#2e8bd8" stroke-width="1"/></svg>
<svg class="abs" style="left:146px;top:51px" width="24" height="19" viewBox="0 0 24 19"><rect x="1.4" y="1.4" width="21" height="16.2" fill="#fafafa" stroke="#333" stroke-width="1.1"/><path d="M2 12 L8 6 L18.6 17 H2 Z M15.4 13.6 L17.6 11.4 L22 15.6 V17 H18.6 Z" fill="#7fb6e8"/><path d="M2 12 L8 6 L18.6 17 M15.4 13.6 L17.6 11.4 L22 15.6" fill="none" stroke="#1e6fc0" stroke-width="1"/><circle cx="18.4" cy="5.6" r="1.6" fill="#f2994a"/></svg>
<div class="abs" style="left:0;top:84px;width:286px;height:452px;overflow:hidden"><div class="abs" style="left:0;top:-84px;width:286px;height:536px"><div class="pl" style="top:79.1px">透明度</div><div class="track" style="left:106px;top:86.2px;width:88px"></div><div class="knob" style="left:104.5px;top:82.2px"></div><div class="num" style="left:203px;top:76px"><i class="u"></i><i class="d"></i></div>
<div class="pl" style="top:108.9px">サイズ</div><div class="track" style="left:106px;top:116px;width:88px"></div><div class="knob" style="left:104.5px;top:112px"></div><div class="num" style="left:203px;top:106px"><i class="u"></i><i class="d"></i></div>
<div class="pl" style="top:138.9px">ぼかし</div><div class="track" style="left:106px;top:146px;width:88px"></div><div class="knob" style="left:104.5px;top:142px"></div><div class="num" style="left:203px;top:136px"><i class="u"></i><i class="d"></i></div>
<div class="pl" style="top:168.9px">距離</div><div class="track" style="left:106px;top:176px;width:88px"></div><div class="knob" style="left:104.5px;top:172px"></div><div class="num" style="left:203px;top:166px"><i class="u"></i><i class="d"></i></div>
<div class="sec" style="top:200px"><div class="tri-d"></div>光彩</div>
<div class="pl" style="top:238.5px">標準スタイル</div><div class="btn" style="left:230px;top:236px"><div style="position:absolute;left:7px;top:4px;width:14px;height:14.5px;border:1.5px solid #858585;border-radius:3px;background:#fbfbfb;box-shadow:inset 0 0 1.5px rgba(0,0,0,0.35)"></div></div>
<div class="pl" style="top:268.5px">色</div><div class="btn" style="left:230px;top:266px"><svg style="position:absolute;left:5px;top:1px" width="20" height="21" viewBox="0 0 20 21"><path d="M2.9 8.4 L8.6 2.8 L13.8 7.4 L8.4 14 Z" fill="#fff" stroke="#444" stroke-width="0.9"/><path d="M5.4 6 L11.2 11 L12.4 9.4 L6.8 4.6 Z" fill="#2e86d6"/><path d="M9.6 6.4 V2 C9.6 0.6 11.2 0.6 11.2 2 V6.6" fill="none" stroke="#333" stroke-width="1"/><path d="M12 5 C15.4 5 15.8 8.6 15 12.4 C14.4 9.6 14 7 12 5 Z" fill="#2e86d6" stroke="#2e86d6" stroke-width="0.6"/><rect x="0.4" y="15.6" width="17.2" height="4" fill="#bcd5ee" stroke="#a9c6e3" stroke-width="0.5"/></svg></div>
<div class="pl" style="top:298.9px">サイズ</div><div class="track" style="left:106px;top:306px;width:88px"></div><div class="track" style="left:106px;top:306px;width:10.2px;background:#1a79f0"></div><div class="knob" style="left:109.7px;top:302px"></div><div class="num" style="left:203px;top:296px">10 pt<i class="u"></i><i class="d"></i></div>
<div class="pl" style="top:328.9px">透明度</div><div class="track" style="left:106px;top:336px;width:88px"></div><div class="knob" style="left:104.5px;top:332px"></div><div class="num" style="left:203px;top:326px">0%<i class="u"></i><i class="d"></i></div>
<div class="sec" style="top:360px"><div class="tri-d"></div>ぼかし</div>
<div class="pl" style="top:398.5px">標準スタイル</div><div class="btn" style="left:230px;top:396px"><div style="position:absolute;left:7px;top:4px;width:14px;height:14.5px;border:1.5px solid #858585;border-radius:3px;background:#fbfbfb;box-shadow:inset 0 0 1.5px rgba(0,0,0,0.35)"></div></div>
<div class="pl" style="top:428.9px">サイズ</div><div class="track" style="left:106px;top:436px;width:88px"></div><div class="track" style="left:106px;top:436px;width:36.8px;background:#1a79f0"></div><div class="knob" style="left:136.3px;top:432px"></div><div class="num" style="left:203px;top:426px">41 pt<i class="u"></i><i class="d"></i></div>
<div class="sec2" style="top:460.3px"><div class="tri-r"></div><span style="letter-spacing:1.5px">3-D</span> 書式</div>
<div class="sec2" style="top:485.2px"><div class="tri-r"></div><span style="letter-spacing:1.5px">3-D</span> 回転</div>
<div class="sec2" style="top:510.1px"><div class="tri-r"></div>アート効果</div>
<div class="abs" style="left:0;top:535px;width:286px;height:1px;background:#d6d6d6"></div></div></div>
<div class="abs" style="left:286px;top:79px;width:14px;height:457px;background:#f4f4f4;border-left:1px solid #e2e2e2"></div>
<div class="abs" style="left:289px;top:275px;width:7px;height:257px;border-radius:3.5px;background:#bdbdbd"></div>
<svg class="abs" style="left:282px;top:12px" width="18" height="24" viewBox="0 0 18 24"><g transform="translate(3.6 3.4)"><path d="M0 0 V13.6 L3.1 10.7 L5.6 16.2 L8 15.1 L5.5 9.8 H9.8 Z" fill="#0a0a0a" stroke="#fff" stroke-width="1.2" stroke-linejoin="round"/></g></svg>
</div>
<!-- STATUS -->
<div id="status">
<div class="st" style="left:24px;top:5px">スライド 2 / 2</div>
<div class="st" style="left:118px;top:5px">日本語</div>
<svg class="abs" style="left:606px;top:5px" width="14" height="14" viewBox="0 0 14 14"><path d="M1 6.6 H13.4 M1 9.4 H13.4 M1 12.2 H10" stroke="#5a5a5a" stroke-width="1.1"/><path d="M5 4.6 L7.2 1.4 L9.4 4.6 Z" fill="#5a5a5a"/></svg>
<div class="st" style="left:623.5px;top:5px">メモ</div>
<svg class="abs" style="left:667px;top:6px" width="15" height="13" viewBox="0 0 15 13"><path d="M0.6 0.6 H14 V9 H6.2 L3.2 12 V9 H0.6 Z" fill="#4e4e4e"/></svg>
<div class="st" style="left:685px;top:5px">コメント</div>
<div class="abs" style="left:740px;top:0;width:36px;height:23px;background:#9e9e9e"></div>
<svg class="abs" style="left:750px;top:5px" width="16" height="14" viewBox="0 0 16 14"><rect x="0.4" y="0.6" width="15.2" height="12.8" rx="1.4" fill="#fff"/><rect x="5.6" y="2.8" width="8" height="5" fill="#c4c4c4" stroke="#a6a6a6" stroke-width="0.8"/><path d="M5.4 10.4 H13.8" stroke="#a0a0a0" stroke-width="1.1"/></svg>
<svg class="abs" style="left:786px;top:6px" width="15" height="13" viewBox="0 0 15 13"><rect x="0" y="0.4" width="6.2" height="4.8" fill="#4e4e4e"/><rect x="8.6" y="0.4" width="6.2" height="4.8" fill="#4e4e4e"/><rect x="0" y="7.6" width="6.2" height="4.8" fill="#4e4e4e"/><rect x="8.6" y="7.6" width="6.2" height="4.8" fill="#4e4e4e"/></svg>
<svg class="abs" style="left:823px;top:5px" width="16" height="15" viewBox="0 0 16 15"><path d="M0.4 1 H15.6" stroke="#4e4e4e" stroke-width="1.4"/><rect x="1.6" y="1.4" width="12.8" height="7.6" fill="none" stroke="#4e4e4e" stroke-width="1.2"/><path d="M4.4 4.6 H11.6 M8 9 V13 M4.6 13.4 H11.4" stroke="#4e4e4e" stroke-width="1.2"/></svg>
<div class="abs" style="left:855px;top:11px;width:8px;height:2px;background:#666"></div>
<div class="abs" style="left:871px;top:10px;width:98px;height:4px;border-radius:2px;background:#a9a9a9"></div>
<div class="abs" style="left:919px;top:11px;width:2px;height:2px;background:#e6e6e6"></div>
<div class="abs" style="left:891px;top:5.5px;width:13px;height:13px;border-radius:50%;background:#fff;border:1px solid #b0b0b0"></div>
<div class="abs" style="left:977px;top:11px;width:9px;height:2px;background:#666"></div><div class="abs" style="left:980.5px;top:7.5px;width:2px;height:9px;background:#666"></div>
<div class="st" style="left:1004px;top:5px;font-size:12.5px;color:#5a5a5a">54%</div>
<svg class="abs" style="left:1050px;top:5px" width="14" height="14" viewBox="0 0 14 14"><rect x="0.8" y="0.8" width="12.4" height="12.4" fill="none" stroke="#4e4e4e" stroke-width="1.1"/><path d="M7 2.4 V5 M7 9 V11.6 M2.4 7 H5 M9 7 H11.6 M5.8 3.8 L7 2.4 L8.2 3.8 M5.8 10.2 L7 11.6 L8.2 10.2 M3.8 5.8 L2.4 7 L3.8 8.2 M10.2 5.8 L11.6 7 L10.2 8.2" fill="none" stroke="#4e4e4e" stroke-width="0.9"/></svg>
</div>
</div>
</body>
</html>
